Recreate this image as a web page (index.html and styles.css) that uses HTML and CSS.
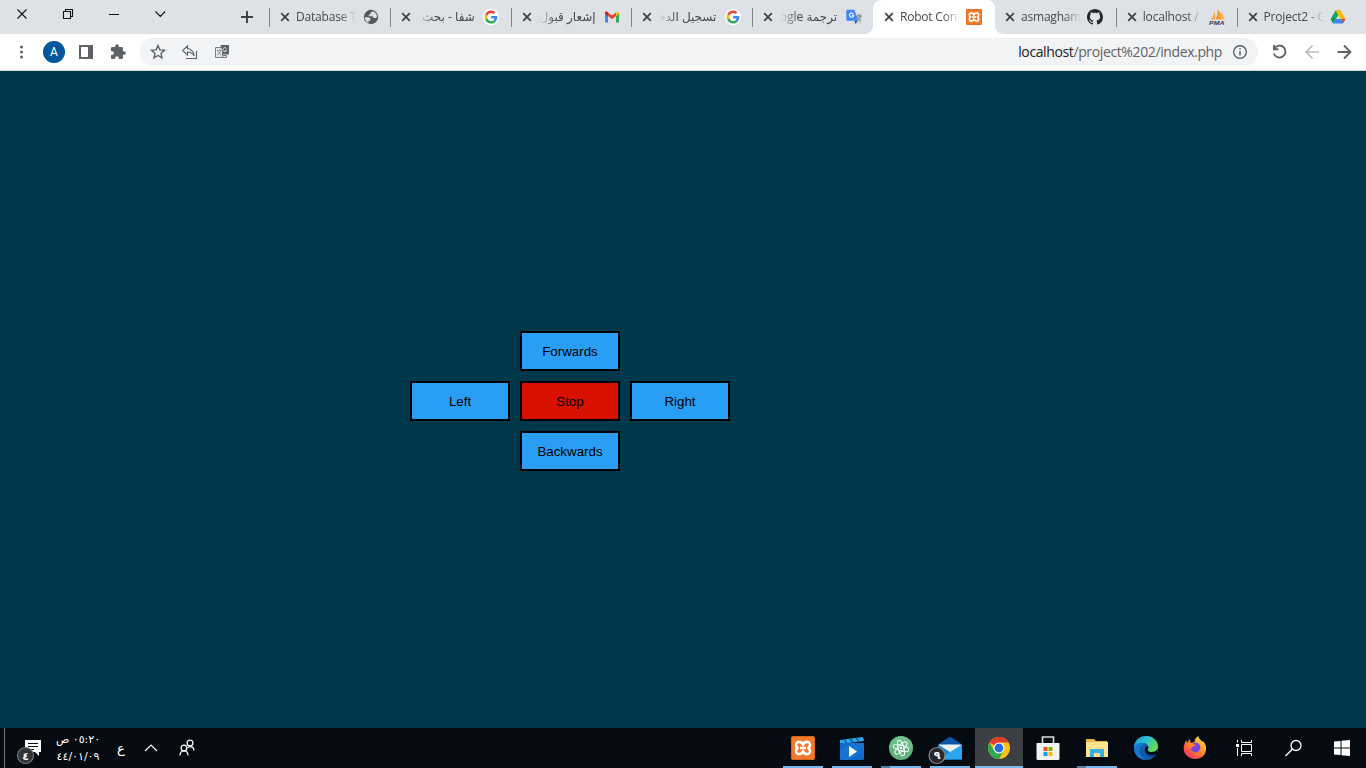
FILE: index.html
```html
<!DOCTYPE html>
<html lang="en">
<head>
<meta charset="utf-8">
<title>Robot Control</title>
<link rel="stylesheet" href="styles.css">
</head>
<body>
<svg class="defs" width="0" height="0">
  <symbol id="x" viewBox="0 0 10 10"><path d="M1.200 1.200l7.600 7.600M8.800 1.200L1.200 8.800" stroke="#3c4043" stroke-width="1.700" fill="none"/></symbol>
  <symbol id="google" viewBox="0 0 48 48"><circle cx="24" cy="24" r="24" fill="#fff"/><g transform="translate(4.500 4.500) scale(.82)"><path fill="#EA4335" d="M24 9.500c3.540 0 6.710 1.220 9.210 3.600l6.850-6.850C35.900 2.380 30.470 0 24 0 14.620 0 6.510 5.380 2.560 13.220l7.980 6.190C12.430 13.720 17.740 9.500 24 9.500z"/><path fill="#4285F4" d="M46.980 24.550c0-1.570-.15-3.090-.38-4.550H24v9.020h12.940c-.58 2.960-2.260 5.480-4.780 7.180l7.730 6c4.510-4.180 7.090-10.360 7.090-17.650z"/><path fill="#FBBC05" d="M10.530 28.590c-.48-1.450-.76-2.990-.76-4.590s.27-3.140.76-4.590l-7.980-6.190C.92 16.460 0 20.120 0 24s.92 7.540 2.560 10.780l7.970-6.190z"/><path fill="#34A853" d="M24 48c6.480 0 11.930-2.130 15.890-5.810l-7.730-6c-2.150 1.450-4.920 2.300-8.160 2.300-6.260 0-11.570-4.220-13.470-9.910l-7.980 6.190C6.510 42.620 14.620 48 24 48z"/></g></symbol>
  <symbol id="xampp" viewBox="0 0 24 24"><rect width="24" height="24" rx="2.500" fill="#f4792b"/><rect x=".5" y=".5" width="23" height="23" rx="2" fill="none" stroke="#d96518"/><path d="M12 9C11 5 5 4.700 5 9c0 1.600.6 2.400 1.700 3C5.600 12.600 5 13.400 5 15c0 4.300 6 4 7 0 1 4 7 4.300 7 0 0-1.600-.6-2.400-1.700-3 1.100-.6 1.700-1.400 1.700-3 0-4.300-6-4-7 0zM9 12h6" fill="none" stroke="#fff" stroke-width="2.600" stroke-linejoin="round"/></symbol>
</svg>

<header class="tabstrip">
  <div class="window-controls">
    <svg width="269" height="34"><g fill="none" stroke="#111" stroke-width="1.100"><path d="M17.500 9.500l9 9M26.500 9.500l-9 9"/><path d="M63.500 11.500h7v7h-7zM65.500 11.500v-2h7v7h-2M109 14.500h10M155.500 11.500l4.800 5 4.800-5"/></g><path d="M247 11v12M241 17h12" stroke="#3c4043" stroke-width="1.900"/></svg>
  </div>
  <nav class="tabs">
    <div class="tab"><svg class="close"><use href="#x"/></svg><span class="label">Database T</span><svg class="fav" viewBox="0 0 16 16"><circle cx="8" cy="8" r="7.200" fill="#55585c"/><path d="M1.800 8.200h3.400l2.300 1.300-.3 2.200H5.500v2.200C3 12.800 1.900 10.500 1.800 8.200zM9.500 2.200l-2 1.700v1.600H5.800v1.700h3.700l1.200 1.900h2.200l1.200-1C14 5 12.200 2.800 9.500 2.200z" fill="#dee1e6"/></svg></div>
    <div class="tab"><svg class="close"><use href="#x"/></svg><span class="label ar" dir="rtl">شفا - بحث</span><svg class="fav"><use href="#google"/></svg></div>
    <div class="tab"><svg class="close"><use href="#x"/></svg><span class="label ar" dir="rtl">إشعار قبول</span><svg class="fav" viewBox="0 0 16 16"><path d="M1 4v9.500h3V7z" fill="#4285f4"/><path d="M15 4v9.500h-3V7z" fill="#34a853"/><path d="M12 7V4l1-1c1-.7 2 0 2 1v1z" fill="#fbbc04"/><path d="M1 5V4c0-1.300 1.300-1.900 2.300-1L8 6.500 12 3.400V7l-4 3.200L4 7z" fill="#ea4335"/><path d="M1 4c0-1.300 1.300-1.900 2.300-1l.7.6V7L1 5z" fill="#c5221f"/></svg></div>
    <div class="tab"><svg class="close"><use href="#x"/></svg><span class="label ar" dir="rtl">تسجيل الدخول</span><svg class="fav"><use href="#google"/></svg></div>
    <div class="tab"><svg class="close"><use href="#x"/></svg><span class="label ar" dir="rtl">ترجمة Google</span><svg class="fav" viewBox="0 0 16 16"><path d="M6 4h10v11H9z" fill="#d3d5d8"/><path d="M1.500.7h7l3.500 11H1.500A1.200 1.200 0 0 1 .3 10.500V2A1.200 1.200 0 0 1 1.500.7z" fill="#4285f4"/><path d="M8.500 11.700H12L9.300 15z" fill="#3057b5"/><path d="M10.500 7h5M13 5.500V7M14.600 7c-.4 2-2 3.700-3 4.500M11.500 8c.8 2 2 3.200 3.300 4" stroke="#607988" fill="none"/><path d="M7.300 4.800A2.100 2.100 0 1 0 7.700 6.400H6" stroke="#fff" fill="none" stroke-width="1.100"/></svg></div>
    <div class="tab active"><svg class="close"><use href="#x"/></svg><span class="label">Robot Cont</span><svg class="fav"><use href="#xampp"/></svg></div>
    <div class="tab"><svg class="close"><use href="#x"/></svg><span class="label">asmagham</span><svg class="fav" viewBox="0 0 16 16"><path fill="#24292e" d="M8 0C3.580 0 0 3.580 0 8c0 3.540 2.290 6.530 5.470 7.590.4.070.55-.17.55-.38 0-.19-.01-.82-.01-1.490-2.010.37-2.530-.49-2.690-.94-.09-.23-.48-.94-.82-1.130-.28-.15-.68-.52-.01-.53.63-.01 1.080.58 1.230.82.72 1.210 1.870.87 2.330.66.070-.52.28-.87.51-1.070-1.780-.2-3.640-.89-3.640-3.950 0-.87.31-1.590.82-2.150-.08-.2-.36-1.020.08-2.120 0 0 .67-.21 2.200.82.64-.18 1.320-.27 2-.27s1.360.09 2 .27c1.530-1.040 2.200-.82 2.200-.82.44 1.100.16 1.920.08 2.120.51.56.82 1.270.82 2.150 0 3.070-1.870 3.750-3.650 3.950.29.25.54.73.54 1.480 0 1.070-.01 1.930-.01 2.200 0 .21.15.46.55.38A8.010 8.010 0 0 0 16 8c0-4.420-3.580-8-8-8z"/></svg></div>
    <div class="tab"><svg class="close"><use href="#x"/></svg><span class="label">localhost /</span><svg class="fav" viewBox="0 0 16 16"><path d="M1 10.500Q5 7 5.500 2.500 7 6 6 10.500z" fill="#f9ae45"/><path d="M6.500 10.500Q9 6 8.500.5 13 4 12.500 10.500z" fill="#f89c2c"/><path d="M12 3q3 3 3.500 7H13z" fill="#f9b04a"/><text x="0" y="15.500" class="pma" textLength="15.500" lengthAdjust="spacingAndGlyphs">PMA</text></svg></div>
    <div class="tab"><svg class="close"><use href="#x"/></svg><span class="label">Project2 - G</span><svg class="fav" viewBox="0 0 16 16"><path d="M5.500 1.500h5L8 6 3.200 14.500.6 10z" fill="#11a861"/><path d="M5.500 1.500h5l5 8.500h-5z" fill="#ffba00"/><path d="M.6 10l2.600 4.500L5.800 10 8 6z" fill="#0f9d58"/><path d="M5.700 10h9.800l-2.600 4.500H3.200z" fill="#4285f4"/><path d="M12 10h3.500l-2.600 4.500z" fill="#ea4335"/></svg></div>
  </nav>
</header>

<div class="toolbar">
  <svg class="tools" width="140" height="36"><g fill="#5f6368"><circle cx="21.500" cy="13" r="1.500"/><circle cx="21.500" cy="18" r="1.500"/><circle cx="21.500" cy="23" r="1.500"/><path fill-rule="evenodd" d="M79 11h14v14H79zm2 2v10h7V13z"/><path transform="translate(109.500 9.500) scale(.71)" d="M20.500 11H19V7a2 2 0 0 0-2-2h-4V3.500a2.500 2.500 0 0 0-5 0V5H4a2 2 0 0 0-2 2v3.800h1.500a2.700 2.700 0 0 1 0 5.400H2V20a2 2 0 0 0 2 2h3.800v-1.500a2.700 2.700 0 0 1 5.400 0V22H17a2 2 0 0 0 2-2v-4h1.500a2.500 2.500 0 0 0 0-5z"/></g><circle cx="54" cy="18" r="11" fill="#01579b"/><text x="54" y="22.300" class="avatar">A</text></svg>
  <div class="omnibox">
    <svg width="100" height="28"><g fill="none" stroke="#5f6368" stroke-width="1.400"><path d="M18 7.600l1.900 4.300 4.600.4-3.500 3.100 1 4.500-4-2.400-4 2.400 1-4.500-3.500-3.100 4.600-.4z"/><path d="M47.500 8l-5 4.500 5 4.500v-3c3 0 5 1 6.700 4-.5-4.500-3-7-6.700-7.500zM56.500 13v7.500H46" stroke-width="1.100"/></g><path d="M75.500 9.500h7v10h-7zM82.500 17.500h4v2h-4" fill="#e5e6e8" stroke="#7a7e83"/><path d="M80.500 7h8.500v9.500h-6z" fill="#5f6368"/><path d="M77 12.500h4.500M79.500 11.500v1M81 13l-3.500 4M78 13.500l3 3.500" stroke="#777b80" stroke-width=".8"/><path d="M86.500 10.500a2 2 0 1 0 .2 2H85" fill="none" stroke="#d5d7da"/></svg>
    <span class="url"><b>localhost</b>/project%202/index.php</span>
    <svg width="36" height="28"><circle cx="18" cy="14" r="6.300" fill="none" stroke="#5f6368" stroke-width="1.400"/><path d="M18 13v4.500M18 10v1.600" stroke="#5f6368" stroke-width="1.500"/></svg>
  </div>
  <svg width="108" height="36"><g fill="none" stroke="#5f6368" stroke-width="1.900"><path d="M16.500 14.200a6 6 0 1 1-.7 5.300M16 11v4.200h4.500"/><path d="M61 18H48M54.500 11.500L48 18l6.500 6.500" stroke="#babcbe" stroke-width="1.700"/><path d="M79.500 18h13M86 11.500l6.500 6.500-6.500 6.500"/></g></svg>
</div>

<main class="page">
  <div class="pad">
    <button class="btn forwards">Forwards</button>
    <button class="btn left">Left</button>
    <button class="btn stop">Stop</button>
    <button class="btn right">Right</button>
    <button class="btn backwards">Backwards</button>
  </div>
</main>

<footer class="taskbar">
  <div class="tray">
    <svg width="50" height="40"><path d="M4.500 0v40" stroke="#70757a"/><path d="M25 12h16v12h-2v4l-4-4H25z" fill="#fff"/><path d="M28 15.500h10M28 18.500h10M28 21.500h6" stroke="#060b12"/><circle cx="25.500" cy="27.500" r="8" fill="#303338" stroke="#777" stroke-width="1.200"/><text x="25.500" y="31.500" class="count">٤</text></svg>
    <div class="clock"><span dir="rtl">٠٥:٢٠ ص</span><span>٤٤/٠١/٠٩</span></div>
    <span class="lang">ع</span>
    <svg width="75" height="40"><g fill="none" stroke="#fff" stroke-width="1.200"><path d="M9 23l6-6 6 6"/><circle cx="48" cy="20" r="2.900"/><path d="M44 27.500c0-6 8-6 8 0"/><circle cx="54" cy="15" r="2.900"/><path d="M51.500 20c2-2.500 6.500-1.500 6.500 2.500"/></g></svg>
  </div>
  <div class="apps">
    <div class="app open"><svg viewBox="0 0 24 24"><use href="#xampp"/></svg></div>
    <div class="app open"><svg viewBox="0 0 24 24"><path d="M0 4l23-3 1 4-24 3z" fill="#30a8e8"/><path d="M4 3.500l3 3.500M10 2.700l3 3.500M16 2l3 3.500" stroke="#0b5db0" stroke-width="1.500"/><path d="M0 7h24v15.500a1.500 1.500 0 0 1-1.500 1.500h-21A1.500 1.500 0 0 1 0 22.500z" fill="#1268c6"/><path d="M0 13l13-6h11v8L8 24H1.500A1.500 1.500 0 0 1 0 22.500z" fill="#1b7edb" opacity=".5"/><path d="M9 10l8 5.500L9 21z" fill="#fff"/></svg></div>
    <div class="app open multi"><svg viewBox="0 0 24 24"><circle cx="12" cy="12" r="12" fill="#5fb57d"/><path d="M0 12a12 12 0 0 1 24 0z" fill="#75c790" opacity=".6"/><g fill="none" stroke="#fff"><ellipse cx="12" cy="12" rx="8" ry="2.800" transform="rotate(15 12 12)"/><ellipse cx="12" cy="12" rx="8" ry="2.800" transform="rotate(75 12 12)"/><ellipse cx="12" cy="12" rx="8" ry="2.800" transform="rotate(135 12 12)"/></g><circle cx="12" cy="12" r="1.200" fill="#fff"/></svg></div>
    <div class="app open"><svg class="wide" viewBox="0 0 48 40"><g transform="translate(-8 -.5)"><path d="M20 17l12-8 12 8-12 11z" fill="#0b58a8"/><path d="M21 17h22v4l-11 8-11-8z" fill="#eef1f5"/><path d="M20 17l24 15H20z" fill="#1684d6"/><path d="M44 17v15H20z" fill="#2ba5ee"/></g><circle cx="11" cy="27.500" r="8" fill="#25292e" stroke="#888" stroke-width="1.200"/><text x="11" y="31" class="count">٩</text></svg></div>
    <div class="app open current"><svg viewBox="0 0 24 24"><circle cx="12" cy="12" r="11" fill="#fbc116"/><path d="M12 12L2.470 6.500A11 11 0 0 1 21.530 6.500H12z" fill="#e33b2e"/><path d="M2.470 6.500A11 11 0 0 0 12 23L16.800 14.800 12 12 7.200 14.800z" fill="#2da94f"/><circle cx="12" cy="12" r="5.500" fill="#fff"/><circle cx="12" cy="12" r="4.400" fill="#256be5"/></svg></div>
    <div class="app"><svg viewBox="0 0 24 24"><path d="M6.500 9V1h11v8" fill="none" stroke="#ddd" stroke-width="1.600"/><path d="M.5 7h23v15.500a1.500 1.500 0 0 1-1.500 1.500H2A1.500 1.500 0 0 1 .5 22.500z" fill="#f2f2f2"/><path d="M7.500 11h4v4h-4z" fill="#f25022"/><path d="M12.500 11h4v4h-4z" fill="#7fba00"/><path d="M7.500 16h4v4h-4z" fill="#00a4ef"/><path d="M12.500 16h4v4h-4z" fill="#ffb900"/></svg></div>
    <div class="app open multi"><svg viewBox="0 0 24 24"><path d="M1 3h8l2 2h11v6H1z" fill="#e5b64a"/><path d="M1 6h22v15H1z" fill="#ffe48f"/><path d="M5 21v-8h14v8h-4v-4H9v4z" fill="#39afe4"/></svg></div>
    <div class="app"><svg viewBox="0 0 24 24"><defs><linearGradient id="eg" x1="0" y1="0" x2="1" y2=".5"><stop offset="0" stop-color="#1597d8"/><stop offset=".5" stop-color="#29bfd5"/><stop offset="1" stop-color="#67da55"/></linearGradient></defs><circle cx="12" cy="12" r="12" fill="#0f5dad"/><path d="M0 12C0 4 6 0 12 0c7 0 12 5 12 10 0 4-3 6-6 6-4 0-5-1.500-4-3 1-2 0-6-5-6-4 0-8 2-9 5z" fill="url(#eg)"/><path d="M9 7c-4 0-8 2-9 5 0 7 6 12 12 12-5-2-8-7-6-12 1-3 4-4 7-4-1-.7-2-1-4-1z" fill="#1678cf"/><path d="M9.500 13c0 5 5 8 13 5-.8 1-1.300 1.800-2.500 2.700C14 22 9.500 19 9.500 13z" fill="#103f91"/><path d="M14 13c-1 1.500 0 3 4 3 2 0 4-.8 5.200-2.500L23 18c-6 2.500-12.500.5-12-5 .2-2 1.500-3 2.500-3 1 1 1 2 .5 3z" fill="#060b12"/></svg></div>
    <div class="app"><svg viewBox="0 0 24 24"><defs><linearGradient id="fx" x1="1" y1="0" x2=".2" y2="1"><stop offset="0" stop-color="#fff04a"/><stop offset=".45" stop-color="#ff9b25"/><stop offset="1" stop-color="#f62864"/></linearGradient></defs><path d="M3 4l1 3 3-4 .5 4 4-1c0-3 2-5 4-6 0 3 3 4 4 6l.5-1c2 2 3.500 5 3 9-.8 6-5.500 9-11 9S.7 18.500.7 13C.7 9 2 7 3 4z" fill="url(#fx)"/><circle cx="12.500" cy="11.500" r="4.800" fill="#7542e5"/><path d="M5 9c2-1.500 5-1.500 8 0-1 2-3 1-4 2.500-1 2.500-3 1.500-4-2.500z" fill="#ff8127"/></svg></div>
    <div class="app"><svg viewBox="0 0 24 24"><path d="M9.500 8.500h10v7h-10zM9.500 4v2.500h10V4M9.500 20v-2.500h10V20M5.500 4v2.500M5.500 12v8" fill="none" stroke="#fff"/><path d="M4 8h3v3H4z" fill="#fff"/></svg></div>
    <div class="app"><svg viewBox="0 0 24 24"><circle cx="15" cy="9.500" r="5" fill="none" stroke="#fff" stroke-width="1.300"/><path d="M11.500 13l-7 7" stroke="#fff" stroke-width="1.500"/></svg></div>
    <div class="app"><svg viewBox="0 0 24 24"><path d="M4 5.500L10.500 5v6.500H4zM11.500 4.800L20 4v7.500h-8.500zM4 12.500h6.500V19L4 18.500zM11.500 12.500H20V20l-8.500-.8z" fill="#fff"/></svg></div>
  </div>
</footer>
</body>
</html>
```
FILE: styles.css
```css
* { box-sizing: border-box; }
body { margin: 0; width: 1366px; height: 768px; overflow: hidden; display: flex; flex-direction: column; font-family: "Open Sans", "Noto Sans", "DejaVu Sans", sans-serif; }
svg { display: block; flex: none; }
.defs { display: none; }

.tabstrip { display: flex; height: 34px; background: #dee1e6; }
.window-controls { width: 269px; }
.tabs { display: flex; }
.tab { display: flex; align-items: center; width: 120.8px; height: 34px; padding-left: 11px; background: linear-gradient(#80868b, #80868b) 0 8px / 1px 19px no-repeat; }
.tab.active { position: relative; width: 122px; background: #fff; border-radius: 8px 8px 0 0; }
.tab.active + .tab { background: none; padding-left: 10px; }
.tab.active::before, .tab.active::after { content: ""; position: absolute; bottom: 0; width: 8px; height: 8px; }
.tab.active::before { left: -8px; background: radial-gradient(circle at 0 0, #dee1e6 7.5px, #fff 8px); }
.tab.active::after { right: -8px; background: radial-gradient(circle at 100% 0, #dee1e6 7.5px, #fff 8px); }
.close { width: 10px; height: 10px; }
.label { width: 60px; margin-left: 6px; overflow: hidden; white-space: nowrap; font-size: 12px; line-height: 20px; letter-spacing: -.2px; color: #45494d; -webkit-mask-image: linear-gradient(to right, #000 72%, transparent 100%); mask-image: linear-gradient(to right, #000 72%, transparent 100%); }
.label.ar { width: 58px; margin-right: 2px; letter-spacing: 0; font-family: "Open Sans", "DejaVu Sans", sans-serif; -webkit-mask-image: linear-gradient(to left, #000 68%, transparent 98%); mask-image: linear-gradient(to left, #000 68%, transparent 98%); }
.fav { width: 16px; height: 16px; margin-left: 6.5px; }
.pma { font: italic bold 6px "Liberation Sans", sans-serif; fill: #34365f; }

.toolbar { display: flex; align-items: flex-start; height: 37px; background: #fff; border-bottom: 1px solid #d5d8dc; }
.avatar { font: 12px Roboto, sans-serif; fill: #fff; text-anchor: middle; }
.omnibox { display: flex; align-items: center; width: 1118px; height: 28px; margin-top: 4px; border-radius: 14px; background: #f1f3f4; }
.url { margin-left: auto; font-size: 14px; line-height: 20px; letter-spacing: -.38px; color: #5f6368; }
.url b { font-weight: 400; color: #202124; }

.page { flex: 1; background: #00384b; padding: 260px 0 0 410px; }
.pad { display: grid; grid-template-columns: repeat(3, 100px); grid-auto-rows: 40px; gap: 10px; grid-template-areas: ". f ." "l s r" ". b ."; }
.btn { border: 2px solid #000; background: #2a9df4; color: #000; font: 13.333px "Liberation Sans", Arial, sans-serif; padding: 0; }
.forwards { grid-area: f; }
.left { grid-area: l; }
.stop { grid-area: s; background: #d91100; }
.right { grid-area: r; }
.backwards { grid-area: b; }

.taskbar { display: flex; justify-content: space-between; height: 40px; background: #060b12; color: #fff; }
.tray { display: flex; align-items: center; }
.count { font: bold 11px "DejaVu Sans", sans-serif; fill: #fff; text-anchor: middle; }
.clock { display: flex; flex-direction: column; width: 56px; text-align: center; font: 11px/17px "DejaVu Sans", sans-serif; white-space: nowrap; letter-spacing: -.8px; }
.lang { width: 30px; text-align: center; font: 13px "DejaVu Sans", sans-serif; }
.apps { display: flex; gap: 1px; }
.app { display: flex; align-items: center; justify-content: center; width: 48px; height: 40px; }
.app svg { width: 24px; height: 24px; }
.app .wide { width: 48px; height: 40px; }
.open { background: linear-gradient(#76b9ed, #76b9ed) 4px 38px / 40px 2px no-repeat; }
.multi { background: linear-gradient(to right, #4f7fa6 9px, #76b9ed 9px) 4px 38px / 40px 2px no-repeat; }
.current { background: linear-gradient(#76b9ed, #76b9ed) 0 38px / 48px 2px no-repeat #3b3f44; }
```
